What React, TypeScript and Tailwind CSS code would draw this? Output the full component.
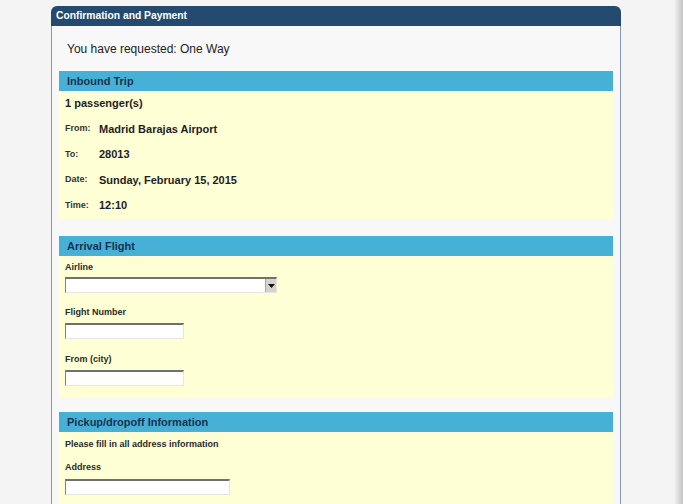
import React from 'react';

const font = { fontFamily: '"Liberation Sans", Arial, sans-serif' };

const SectionHeader = ({ title }: { title: string }) => (
    <div className="h-[20px] bg-[#47b0d7] pl-[8px] flex items-center text-[11px] font-bold text-[#16344f]">
        {title}
    </div>
);

const TextInput = ({ width }: { width: string }) => (
    <div
        className={`${width} h-[16px] bg-white border-t-2 border-l border-b border-r border-t-[#707070] border-l-[#808080] border-b-[#e6e6e0] border-r-[#e6e6e0]`}
    ></div>
);

const InfoRow = ({ label, value }: { label: string; value: string }) => (
    <div className="h-[25.5px] flex items-center">
        <span className="w-[34px] text-[9px] font-bold text-[#333]">{label}</span>
        <span className="text-[11px] font-bold text-[#1e1e1e]">{value}</span>
    </div>
);

const FieldLabel = ({ text }: { text: string }) => (
    <div className="h-[12px] leading-[12px] text-[9px] font-bold text-[#2a2a2a]">{text}</div>
);

export default function App() {
    return (
        <div className="h-screen overflow-hidden flex bg-[#f4f4f4]" style={font}>
            <div className="flex-1 pt-[6px]">
                <div className="ml-[51px] w-[570px]">
                    {/* Title bar */}
                    <div className="h-[20px] bg-[#244a70] rounded-t-[6px] pl-[5px] flex items-center text-[10.3px] font-bold text-white">
                        Confirmation and Payment
                    </div>

                    <div className="bg-[#f8f8f8] border-l border-r border-[#8794b0] pl-[7px] pr-[7px] pb-[40px]">
                        <div className="h-[45px] flex items-center pl-[8px] text-[12px] text-[#222]">
                            You have requested: One Way
                        </div>

                        {/* Inbound Trip */}
                        <SectionHeader title="Inbound Trip" />
                        <div className="bg-[#ffffd5] pl-[6px] h-[128px]">
                            <div className="h-[25px] flex items-center text-[11px] font-bold text-[#1e1e1e]">
                                1 passenger(s)
                            </div>
                            <InfoRow label="From:" value="Madrid Barajas Airport" />
                            <InfoRow label="To:" value="28013" />
                            <InfoRow label="Date:" value="Sunday, February 15, 2015" />
                            <InfoRow label="Time:" value="12:10" />
                        </div>

                        <div className="h-[17px]"></div>

                        {/* Arrival Flight */}
                        <SectionHeader title="Arrival Flight" />
                        <div className="bg-[#ffffd5] pl-[6px] pt-[5px] h-[141px]">
                            <FieldLabel text="Airline" />
                            <div className="mt-[4px] w-[212px] h-[16px] bg-white flex border-t-2 border-l border-b border-r border-t-[#707070] border-l-[#808080] border-b-[#e6e6e0] border-r-[#e6e6e0]">
                                <div className="flex-1"></div>
                                <div className="w-[11px] bg-[#d6d3cb] border-l border-[#a8a8a8] flex items-center justify-center">
                                    <svg width="7" height="4" viewBox="0 0 7 4">
                                        <path d="M0 0h7L3.5 4z" fill="#111" />
                                    </svg>
                                </div>
                            </div>
                            <div className="mt-[13px]">
                                <FieldLabel text="Flight Number" />
                            </div>
                            <div className="mt-[5px]">
                                <TextInput width="w-[119px]" />
                            </div>
                            <div className="mt-[14px]">
                                <FieldLabel text="From (city)" />
                            </div>
                            <div className="mt-[5px]">
                                <TextInput width="w-[119px]" />
                            </div>
                        </div>

                        <div className="h-[15px]"></div>

                        {/* Pickup / dropoff */}
                        <SectionHeader title="Pickup/dropoff Information" />
                        <div className="bg-[#ffffd5] pl-[6px] pt-[6px] h-[140px]">
                            <FieldLabel text="Please fill in all address information" />
                            <div className="mt-[11px]">
                                <FieldLabel text="Address" />
                            </div>
                            <div className="mt-[6px]">
                                <TextInput width="w-[165px]" />
                            </div>
                        </div>
                    </div>
                </div>
            </div>
            <div className="w-[9px] bg-gradient-to-r from-[#f4f4f4] to-[#c4c4c4]"></div>
        </div>
    );
}
